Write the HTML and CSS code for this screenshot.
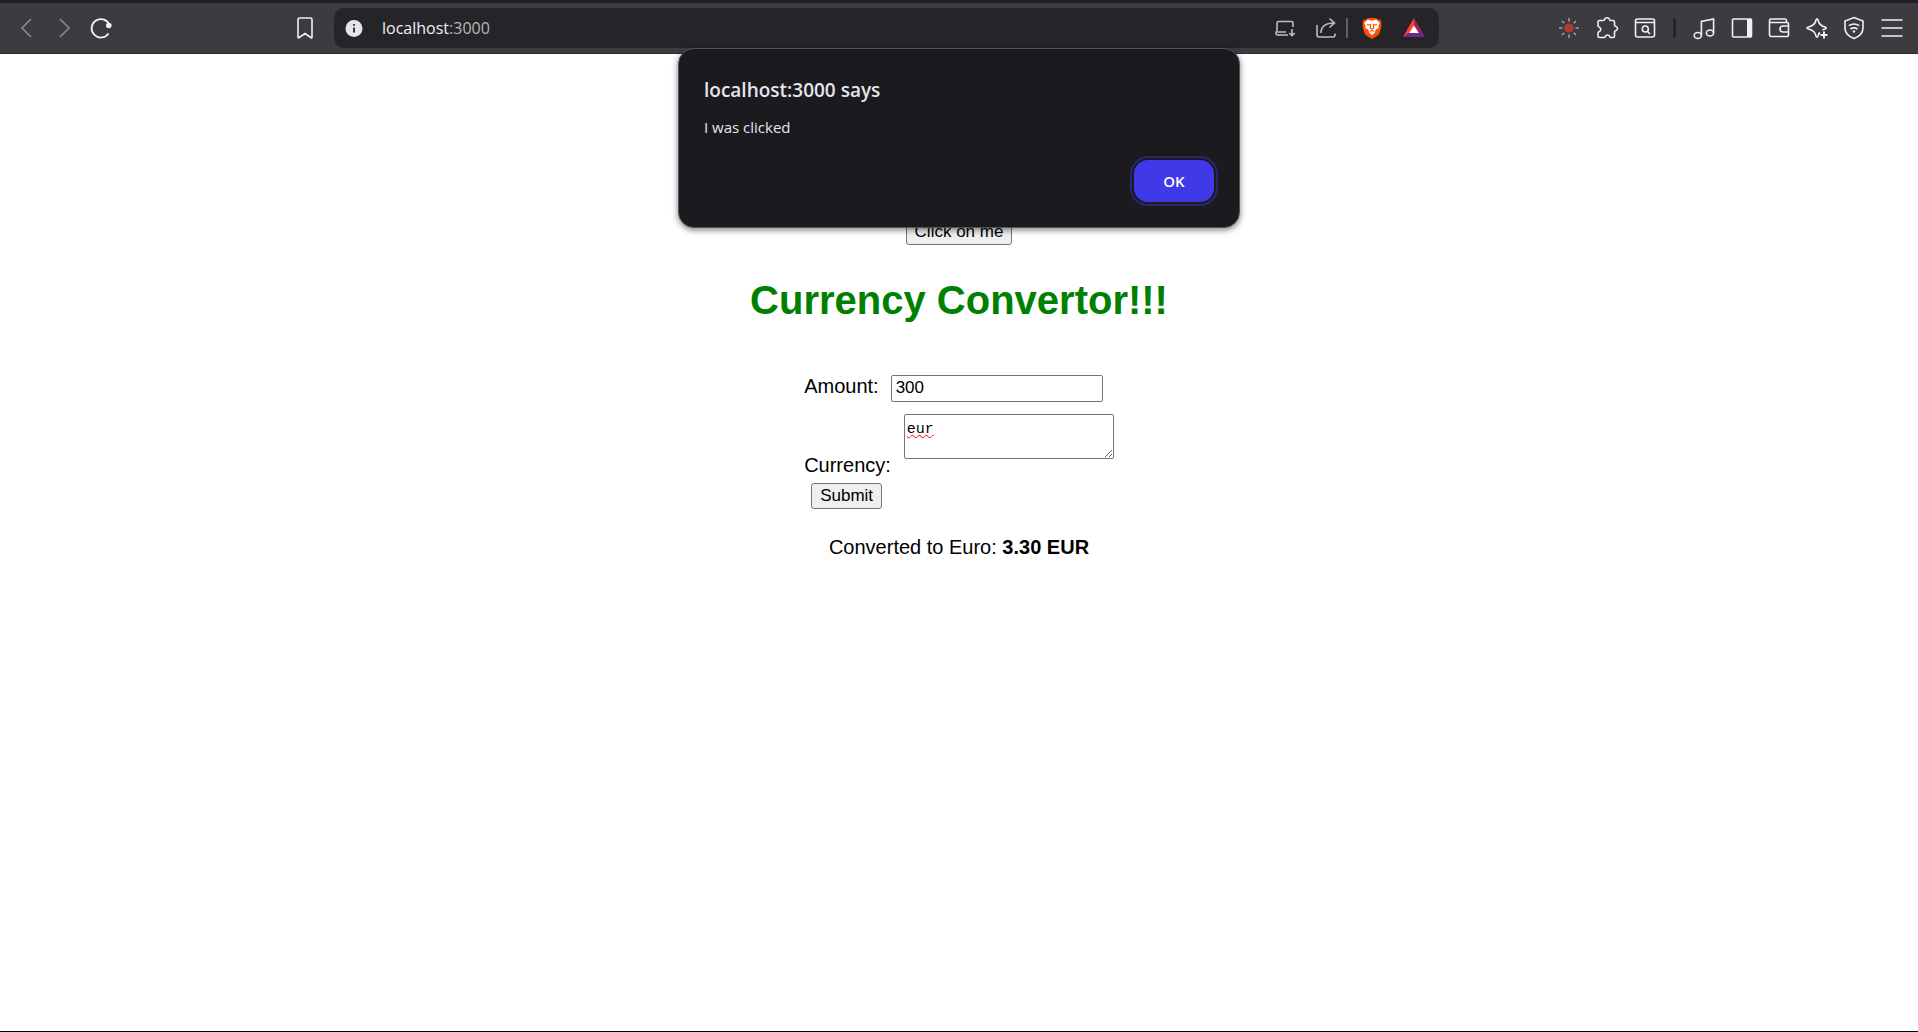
FILE: index.html
```html
<!DOCTYPE html>
<html lang="en">
<head>
<meta charset="utf-8">
<title>Currency Convertor</title>
<link rel="stylesheet" href="styles.css">
</head>
<body>
<header class="toolbar">
  <nav class="group nav" aria-label="Navigation">
    <button class="icon dim" aria-label="Back"><svg viewBox="0 0 22 22"><path d="M16 2 7 11l9 9"/></svg></button>
    <button class="icon dim" aria-label="Forward"><svg viewBox="0 0 22 22"><path d="m7 2 9 9-9 9"/></svg></button>
    <button class="icon" aria-label="Reload"><svg viewBox="0 0 22 22"><path stroke-width="1.8" d="M19.200 7.500A9.200 9.200 0 1 0 18.500 16.400"/><circle class="solid" cx="18.800" cy="8.500" r="2.800"/></svg></button>
  </nav>
  <button class="icon bookmark" aria-label="Bookmark"><svg viewBox="0 0 22 22"><path d="M4 2.500Q4 1 5.500 1h11Q18 1 18 2.500V20q0 1.400-1.200.5L11 16.500l-5.800 4Q4 21.400 4 20Z"/></svg></button>
  <div class="address">
    <svg class="info" viewBox="0 0 22 22"><circle cx="11" cy="11.500" r="8.500" fill="#e6e5ea"/><path d="M11 10.500V15.500M11 7v1.800" stroke="#29282e" stroke-width="1.800"/></svg>
    <span class="url">localhost<span class="port">:3000</span></span>
    <button class="icon soft" aria-label="Install"><svg viewBox="0 0 22 22"><path d="M14 18H3.500Q2 18 2 16.500V15h10M3 14V6q0-1.500 1.500-1.500h13Q19 4.500 19 6v4M18 12v6.500m-2.700-2.500 2.700 2.700 2.700-2.700"/></svg></button>
    <button class="icon soft share" aria-label="Share"><svg viewBox="0 0 22 22"><path d="M2 8v10q0 2 2 2h14q2 0 2-2v-1.500M6 16q0-10 13.500-10M14.500 1.500 19.500 6l-5 4.500"/></svg></button>
    <span class="split"></span>
    <button class="icon shields" aria-label="Shields"><svg viewBox="0 0 22 24"><path fill="#ff4d00" stroke="none" d="m6.500 1h9l2.500 2 2-.2 1.500 3-.7 2 .7 2-2.500 8.500-2 2.200-6 3.500-6-3.500-2-2.200L.5 9.800l.7-2-.7-2 1.500-3L4 3Z"/><path fill="#fff" stroke="none" d="m7 3 4 1 4-1 2.500 1 2 3-1.500 2.500.3 2.500-3.500 2-.5 3L11 20l-3.300-3-.5-3-3.500-2L4 9.500 2.500 7l2-3Z"/><path stroke="#ff4d00" stroke-width="1.100" d="m5.500 8 3.500 1M16.500 8 13 9M9.500 7.500l-.5 4.500 2 1.200 2-1.200-.5-4.500M8.500 16 11 14.500l2.500 1.500"/></svg></button>
    <button class="icon rewards" aria-label="Rewards"><svg viewBox="0 0 22 22"><path fill="#ff4724" stroke="none" d="M11 1v9L7 16l-7 4Z"/><path fill="#9e1f63" stroke="none" d="M11 1v9l4 6 7 4Z"/><path fill="#662d91" stroke="none" d="m0 20 7-5h8l7 5Z"/><path fill="#fff" stroke="none" d="m11 8.500 4.800 7.500H6.200Z"/></svg></button>
  </div>
  <div class="group ext">
    <button class="icon sun" aria-label="Extension"><svg viewBox="0 0 22 22"><circle cx="11" cy="11" r="4.600" fill="#b03a3a" stroke="none"/><path d="M11 1v3.500M11 17.500V21M1 11h3.500M17.500 11H21M4 4l2.300 2.300M15.700 15.700 18 18M18 4l-2.300 2.300M6.300 15.700 4 18"/></svg></button>
    <button class="icon" aria-label="Extensions"><svg viewBox="0 0 22 22"><path d="M3.500 3.500H7Q8.500 3.500 8.500 2.500 9 .7 11 .7t2.500 1.800q0 1 1.500 1H17q1.500 0 1.500 1.500v3q0 1 1 1.200 2 .6 2 2.300t-2 2.300q-1 .2-1 1.200v4q0 1.500-1.500 1.500h-2q-1 0-1.300-1-.6-1.500-2.200-1.500t-2.200 1.500q-.3 1-1.300 1H3.500Q2 20.500 2 19v-3q0-1 1-1.300 1.800-.7 1.800-2.400T3 9.900Q2 9.600 2 8.600V5q0-1.500 1.500-1.500Z"/></svg></button>
    <button class="icon" aria-label="Search tabs"><svg viewBox="0 0 22 22"><rect x="1.500" y="2" width="19" height="18" rx="2"/><path d="M1.500 5.500h19m-7 9 2.500 2.500"/><circle cx="11.300" cy="12" r="3"/></svg></button>
  </div>
  <span class="bar"></span>
  <div class="group tools">
    <button class="icon" aria-label="Media"><svg viewBox="0 0 22 22"><ellipse cx="4.800" cy="18.500" rx="3.600" ry="3"/><ellipse cx="17" cy="16" rx="3.600" ry="3"/><path d="M8.400 18.500V4.500L20.600 2v14"/></svg></button>
    <button class="icon" aria-label="Sidebar"><svg viewBox="0 0 22 22"><rect x="1.500" y="2" width="19" height="18" rx="1"/><path class="solid" d="M16 2h4.500v18H16Z"/></svg></button>
    <button class="icon" aria-label="Wallet"><svg viewBox="0 0 22 22"><path d="M18.500 5.500V4Q18.500 2 17 2H3Q1.500 2 1.500 4v14q0 1.500 1.500 1.500h16q1.500 0 1.500-1.500V7q0-1.500-1.500-1.500H2M20.500 9H15q-3 0-3 3t3 3h5.500"/></svg></button>
    <button class="icon" aria-label="Assistant"><svg viewBox="0 0 22 22"><path d="M14 15.500q-1.500 1-2 3.500-1 2.500-2 0Q9 13.500 2.500 12q-3-1 0-2Q9 8.500 10 3q1-2.500 2 0 1 5.500 7 7 2.500 1 0 2-1.500.4-2.500 1"/><path stroke-width="2" d="M18 14.500v7M14.500 18h7"/></svg></button>
    <button class="icon" aria-label="VPN"><svg viewBox="0 0 22 22"><path d="m11 .5 9 3.500v7q0 7-9 10.500Q2 18 2 11V4ZM5.800 8.700q5.200-3.500 10.400 0M7.500 12q3.500-2.300 7 0"/><circle class="solid" cx="11" cy="14.500" r="1.200"/></svg></button>
    <button class="icon" aria-label="Menu"><svg viewBox="0 0 22 22"><path d="M.500 3h21M.500 11h21M.500 19h21"/></svg></button>
  </div>
</header>

<main class="page">
  <button class="control click">Click on me</button>
  <h1 class="title">Currency Convertor!!!</h1>
  <form class="form">
    <div class="row">
      <label for="amount">Amount:</label>
      <input class="amount" id="amount" type="text" value="300">
    </div>
    <div class="row low">
      <label for="currency">Currency:</label>
      <textarea class="currency" id="currency">eur</textarea>
    </div>
    <button class="control submit" type="button">Submit</button>
  </form>
  <p class="result">Converted to Euro: <b>3.30 EUR</b></p>
</main>

<section class="dialog" role="alertdialog" aria-labelledby="dialog-title" aria-describedby="dialog-text">
  <h2 class="dialog-title" id="dialog-title">localhost:3000 says</h2>
  <p class="dialog-text" id="dialog-text">I was clicked</p>
  <button class="ok">OK</button>
</section>
</body>
</html>
```
FILE: styles.css
```css
* { box-sizing: border-box; }

body {
  margin: 0;
  min-height: 100vh;
  display: flex;
  flex-direction: column;
  background: #fff;
  border-bottom: 1px solid #000;
  color: #000;
  font: 20px/24px "Liberation Sans", Arial, sans-serif;
}

.toolbar {
  display: flex;
  align-items: center;
  height: 54px;
  padding: 0 15px;
  background: #3c3b40;
  border-top: 3px solid #1f1e24;
  border-bottom: 1px solid #2c2b30;
}

.group { display: flex; flex: none; justify-content: space-between; }
.nav { width: 97px; }
.ext { width: 98px; margin-left: 119px; }
.tools { width: 210px; }
.bookmark { margin: 0 18px 0 182px; }

.icon {
  flex: none;
  width: 22px;
  height: 22px;
  padding: 0;
  border: 0;
  background: none;
  color: #f0eff4;
}
.icon svg {
  display: block;
  width: 22px;
  height: 22px;
  fill: none;
  stroke: currentColor;
  stroke-width: 1.6;
  overflow: visible;
}
.icon .solid { fill: currentColor; stroke: none; }
.dim { color: #89888e; }
.soft { color: #bdbcc2; }
.sun { color: #a19da2; }

.bar {
  width: 3px;
  height: 20px;
  margin: 0 17px;
  border-radius: 2px;
  background: #242328;
}

.address {
  flex: 1;
  display: flex;
  align-items: center;
  height: 40px;
  padding: 0 14px 0 9px;
  border-radius: 10px;
  background: #252429;
}
.info { width: 22px; height: 22px; margin-right: 17px; }
.url {
  flex: 1;
  color: #f0eff4;
  font: 16px/24px "Open Sans", "Noto Sans", sans-serif;
}
.port { color: #b9b8be; }
.share { margin-left: 19px; }
.split { width: 2px; height: 20px; margin: 0 13px 0 9px; background: #626167; }
.rewards { margin-left: 20px; }

.page {
  flex: 1;
  display: flex;
  flex-direction: column;
  align-items: center;
  padding-top: 165px;
}

.control {
  height: 26px;
  padding: 0 8px;
  border: 1px solid #767676;
  border-radius: 3px;
  background: #efefef;
  color: #000;
  font: 17px/20px "Liberation Sans", Arial, sans-serif;
}
.title { margin: 32px 0; font-size: 40px; line-height: 46px; color: green; }

.form { display: flex; flex-direction: column; margin-top: 20px; }
.row { display: flex; gap: 12px; line-height: 22px; }
.low { align-items: flex-end; gap: 13px; margin-top: 12px; }
.low label { padding-top: 40px; }
.amount,
.currency {
  margin: 0;
  border: 1px solid #767676;
  border-radius: 2px;
  background: #fff;
  color: #000;
}
.amount {
  width: 212px;
  height: 27px;
  padding: 0 4px 2px;
  font: 17px/20px "Liberation Sans", Arial, sans-serif;
}
.currency {
  align-self: flex-start;
  width: 210px;
  height: 45px;
  padding: 5px 2px 2px;
  font: 15px/20px "Liberation Mono", monospace;
  text-decoration: underline wavy 1px red;
}
.submit { align-self: flex-start; margin: 7px 0 0 7px; }
.result { margin: 26px 0 0; }

/* Alert hangs over the lower edge of the toolbar */
.dialog {
  position: absolute;
  top: 48px;
  left: 50%;
  transform: translateX(-50%);
  display: flex;
  flex-direction: column;
  width: 562px;
  padding: 27px 25px 25px;
  border: 1px solid #55545a;
  border-radius: 16px;
  background: #1b1a1f;
  box-shadow: 0 2px 6px rgba(0, 0, 0, 0.5);
  color: #e6e5ea;
  font: 15px/20px "Open Sans", "Noto Sans", sans-serif;
}
.dialog-title { margin: 0; font-size: 19px; line-height: 28px; font-weight: 600; }
.dialog-text { margin: 13px 0 23px; }
.ok {
  align-self: flex-end;
  width: 80px;
  height: 42px;
  border: 0;
  border-radius: 14px;
  background: #4039e8;
  outline: 2px solid #29266e;
  outline-offset: 2px;
  color: #fff;
  font: 600 15px/20px "Open Sans", "Noto Sans", sans-serif;
}
```
